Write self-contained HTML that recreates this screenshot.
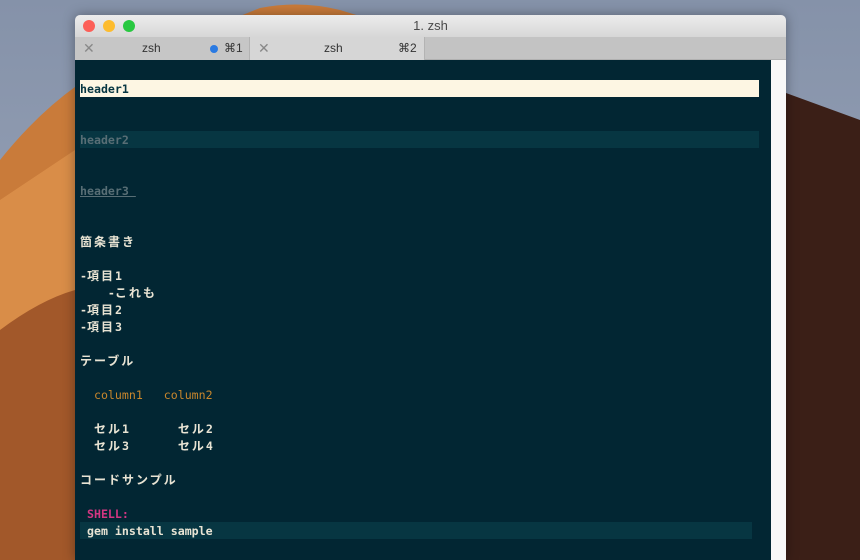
<!DOCTYPE html>
<html><head><meta charset="utf-8"><style>
*{margin:0;padding:0;box-sizing:border-box}
html,body{width:860px;height:560px;overflow:hidden}
body{position:relative;background:linear-gradient(180deg,#8592a9 0%,#8e9ab0 30%,#9aa3b6 100%);font-family:"DejaVu Sans Mono","Noto Sans CJK JP",monospace}
.dune{position:absolute}
.win{position:absolute;left:75px;top:15px;width:711px;height:545px;border-radius:5px 5px 0 0;overflow:hidden;box-shadow:0 0 12px rgba(0,0,0,.35)}
.title{height:22px;background:linear-gradient(#ececec,#d7d7d7);text-align:center;font:13px "Liberation Sans",sans-serif;color:#4a4a4a;line-height:22px;position:relative}
.dot{position:absolute;top:5px;width:12px;height:12px;border-radius:50%}
.tabs{height:23px;background:#c3c3c3;position:relative;border-bottom:1px solid #b0b0b0;font:12px "Liberation Sans",sans-serif;color:#333}
.tab{position:absolute;top:0;height:23px;line-height:23px}
.term{position:absolute;top:45px;left:0;width:696px;bottom:0;background:#022633}
.sb{position:absolute;top:45px;right:0;width:15px;bottom:0;background:#f8f8f8}
.r{position:absolute;left:5px;height:17px;line-height:19px;font-size:11.6px;color:#e9e4d4;white-space:pre;font-weight:bold}
.j{letter-spacing:2px;font-size:12px}
</style></head><body>
<svg class="dune" width="860" height="560" style="left:0;top:0">
<path d="M0 160 Q80 60 180 40 Q230 20 260 8 Q300 0 340 10 L700 120 L860 160 L860 560 L0 560Z" fill="#c97b3a"/>
<path d="M0 200 Q60 160 75 150 L75 560 L0 560Z" fill="#d98d48"/>
<path d="M786 93 L860 120 L860 560 L786 560Z" fill="#3b1f17"/>
<path d="M0 330 Q40 300 75 290 L75 560 L0 560Z" fill="#a2582a"/>
</svg>
<div class="win">
<div class="title">1. zsh
<span class="dot" style="left:8px;background:#fc5f57"></span>
<span class="dot" style="left:28px;background:#fdbc2e"></span>
<span class="dot" style="left:48px;background:#28c840"></span></div>
<div class="tabs">
<div class="tab" style="left:0;width:175px;background:#c6c6c6;border-right:1px solid #b3b3b3"><span style="position:absolute;left:8px;color:#888;font-size:14px">✕</span><span style="position:absolute;left:67px">zsh</span><span style="position:absolute;left:135px;top:8px;width:8px;height:8px;border-radius:50%;background:#2a7ae2"></span><span style="position:absolute;left:149px">⌘1</span></div>
<div class="tab" style="left:175px;width:175px;background:#d6d6d6;border-right:1px solid #b3b3b3"><span style="position:absolute;left:8px;color:#888;font-size:14px">✕</span><span style="position:absolute;left:74px">zsh</span><span style="position:absolute;left:148px">⌘2</span></div>
</div>
<div class="term">
<div class="r" style="top:20px;width:679px;background:#fdf6e3;color:#073642">header1</div>
<div class="r" style="top:71px;width:679px;background:#073642;color:#586e75">header2</div>
<div class="r" style="top:122px;color:#586e75;text-decoration:underline">header3 </div>
<div class="r" style="top:173px"><span class="j">箇条書き</span></div>
<div class="r" style="top:207px">-<span class="j">項目</span>1</div>
<div class="r" style="top:224px">    -<span class="j">これも</span></div>
<div class="r" style="top:241px">-<span class="j">項目</span>2</div>
<div class="r" style="top:258px">-<span class="j">項目</span>3</div>
<div class="r" style="top:292px"><span class="j">テーブル</span></div>
<div class="r" style="top:326px;color:#c8862c;font-weight:normal">  column1   column2</div>
<div class="r" style="top:360px">  <span class="j">セル</span>1       <span class="j">セル</span>2</div>
<div class="r" style="top:377px">  <span class="j">セル</span>3       <span class="j">セル</span>4</div>
<div class="r" style="top:411px"><span class="j">コードサンプル</span></div>
<div class="r" style="top:445px;color:#d33682"> SHELL:</div>
<div class="r" style="top:462px;width:672px;background:#073642"> gem install sample</div>
</div>
<div class="sb"></div>
</div>
</body></html>
